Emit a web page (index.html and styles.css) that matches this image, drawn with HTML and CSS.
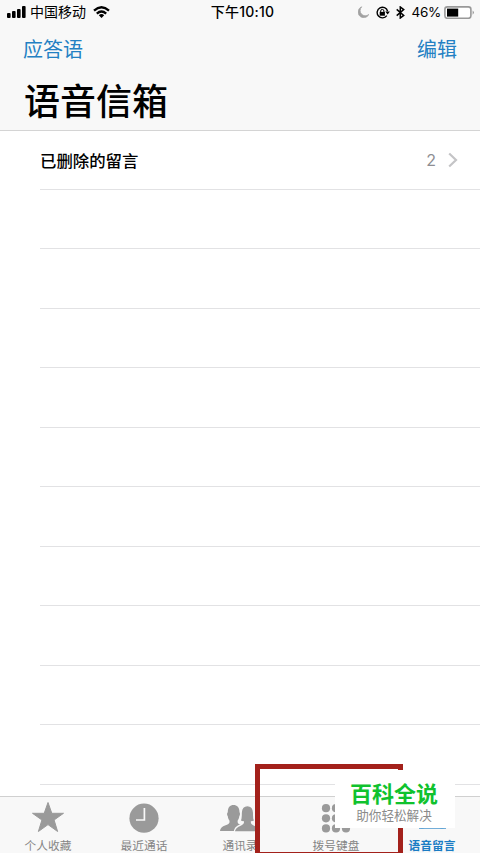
FILE: index.html
```html
<!DOCTYPE html>
<html lang="zh-CN">
<head>
    <meta charset="UTF-8">
    <title>语音信箱</title>
    <link rel="stylesheet" href="styles.css">
</head>
<body>
    <div class="phone">
        <header class="header">
            <div class="status-bar">
                <div class="status-left">
                    <svg class="signal" width="19" height="12" viewBox="0 0 19 12">
                        <rect x="0" y="7" width="3.6" height="5" rx="1"/>
                        <rect x="5" y="5" width="3.6" height="7" rx="1"/>
                        <rect x="10" y="3" width="3.6" height="9" rx="1"/>
                        <rect x="15" y="0" width="3.6" height="12" rx="1"/>
                    </svg>
                    <span class="carrier">中国移动</span>
                    <svg class="wifi" width="17" height="12" viewBox="0 0 17 12" fill="none" stroke="#000" stroke-width="2.3">
                        <path d="M1 4.6Q8.5-2 16 4.6"/>
                        <path d="M3.8 7.6Q8.5 3.4 13.2 7.6"/>
                        <path d="M8.5 12L5.8 9.2Q8.5 7 11.2 9.2Z" fill="#000" stroke="none"/>
                    </svg>
                </div>
                <div class="status-time">下午10:10</div>
                <div class="status-right">
                    <svg width="11" height="12" viewBox="0 0 11 12">
                        <path d="M3.8.8A5.6 5.6 0 1 0 10.8 8.4 5.1 5.1 0 0 1 3.8.8Z" fill="#a2a2a2" stroke="#a2a2a2" stroke-width=".7"/>
                    </svg>
                    <svg class="lock" width="14" height="13" viewBox="0 0 14 13" fill="none" stroke="#000">
                        <path d="M10.8 9.6A5.3 5.3 0 1 1 11.6 5.2" stroke-width="1.4"/>
                        <path d="M9.3 5.4h4.6L11.6 8.6Z" fill="#000" stroke="none"/>
                        <path d="M4.7 6.4V5a1.6 1.6 0 0 1 3.2 0v1.4" stroke-width="1"/>
                        <rect x="3.7" y="5.9" width="5.2" height="3.8" fill="#000" stroke="none"/>
                    </svg>
                    <svg class="bluetooth" width="9" height="13" viewBox="0 0 9 13" fill="none" stroke="#000" stroke-width="1.5">
                        <path d="M.7 3.4l7 6L4.3 12V1l3.4 2.6-7 6"/>
                    </svg>
                    <span class="percent">46%</span>
                    <svg class="battery" width="30" height="13" viewBox="0 0 30 13">
                        <rect x=".9" y=".9" width="26" height="11.4" rx="2.5" fill="#fff" stroke="#999" stroke-width="1.6"/>
                        <rect x="3" y="2.6" width="11.2" height="8" fill="#000"/>
                        <path d="M28.7 4.4q2.2 2.2 0 4.4Z" fill="#888"/>
                    </svg>
                </div>
            </div>
            <div class="nav-bar">
                <a class="nav-link">应答语</a>
                <a class="nav-link">编辑</a>
            </div>
            <h1>语音信箱</h1>
        </header>

        <main class="list">
            <div class="row">
                <span class="row-title">已删除的留言</span>
                <span class="row-count">2</span>
                <svg class="chevron" width="10" height="16" viewBox="0 0 10 16" fill="none" stroke="#c4c4c6" stroke-width="2.2">
                    <path d="M1.2 1.5L8 8l-6.8 6.5"/>
                </svg>
            </div>
            <div class="row"></div>
            <div class="row"></div>
            <div class="row"></div>
            <div class="row"></div>
            <div class="row"></div>
            <div class="row"></div>
            <div class="row"></div>
            <div class="row"></div>
            <div class="row"></div>
            <div class="row"></div>
        </main>

        <nav class="tab-bar">
            <div class="tab">
                <svg width="34" height="32" viewBox="0 0 34 32">
                    <path d="M17 1.5L20.8 12.3H32.5L23.1 19 26.6 30.5 17 23.6 7.4 30.5 10.9 19 1.5 12.3H13.2Z" fill="#9a9a9a" stroke="#9a9a9a" stroke-linejoin="round"/>
                </svg>
                <span>个人收藏</span>
            </div>
            <div class="tab">
                <svg width="34" height="32" viewBox="0 0 34 32">
                    <circle cx="17" cy="17.2" r="14.6" fill="#9a9a9a"/>
                    <path d="M17.4 7v12H9" fill="none" stroke="#f8f8f8" stroke-width="1.7"/>
                </svg>
                <span>最近通话</span>
            </div>
            <div class="tab">
                <svg width="42" height="32" viewBox="0 0 42 32" fill="#9a9a9a">
                    <path d="M1 30c.4-3.6 3.2-5 7-6.3 2.2-.8 3-2.2 2.4-4.2-1-1.3-1.4-2.6-1.6-4.3-1-1.3-1-3 0-4C8.8 6.500 11 4 14.500 4s6 2.500 6 7.200c.8 1 .6 2.700-.2 4-.2 1.700-.6 3-1.600 4.300-.5 2 .3 3.400 2.500 4.200L20 30Z"/>
                    <path d="M15.200 31c.3-4.500 3.200-6 6.800-7.200 2-.7 2.600-1.500 2.300-3-1.200.1-2.300-.2-3.300-.9 1.600-2.200 1-5.500 1.200-8.500.3-4.200 2.600-6.700 6.200-6.700s5.900 2.500 6.200 6.700c.2 3-.4 6.300 1.200 8.500-1 .7-2.100 1-3.300.9-.3 1.500.3 2.300 2.300 3 3.600 1.200 6.500 2.700 6.800 7.200Z" stroke="#f8f8f8" stroke-width="1.300"/>
                </svg>
                <span>通讯录</span>
            </div>
            <div class="tab">
                <svg width="30" height="32" viewBox="0 0 30 32" fill="#9a9a9a">
                    <circle cx="5" cy="7.2" r="4.1"/>
                    <circle cx="15" cy="7.2" r="4.1"/>
                    <circle cx="25" cy="7.2" r="4.1"/>
                    <circle cx="5" cy="17.3" r="4.1"/>
                    <circle cx="15" cy="17.3" r="4.1"/>
                    <circle cx="25" cy="17.3" r="4.1"/>
                    <circle cx="5" cy="27.4" r="4.1"/>
                    <circle cx="15" cy="27.4" r="4.1"/>
                    <circle cx="25" cy="27.4" r="4.1"/>
                </svg>
                <span>拨号键盘</span>
            </div>
            <div class="tab active">
                <svg width="40" height="32" viewBox="0 0 40 32" fill="none" stroke="#1a7cc4" stroke-width="2.4">
                    <circle cx="10" cy="18" r="8"/>
                    <circle cx="30" cy="18" r="8"/>
                    <path d="M7 26.4h27"/>
                </svg>
                <span>语音留言</span>
            </div>
        </nav>

        <!-- highlight over the keypad tab -->
        <div class="highlight"></div>
        <div class="badge">
            <div class="badge-title">百科全说</div>
            <div class="badge-text">助你轻松解决</div>
        </div>
    </div>
</body>
</html>
```
FILE: styles.css
```css
* {
    box-sizing: border-box;
}

body {
    margin: 0;
    font-family: "Liberation Sans", "Noto Sans CJK SC", sans-serif;
    background: #fff;
    color: #000;
}

.phone {
    position: relative;
    width: 480px;
    height: 853px;
    display: flex;
    flex-direction: column;
    overflow: hidden;
}

svg {
    display: block;
    flex-shrink: 0;
}

.header {
    height: 131px;
    background: #f8f8f8;
    border-bottom: 1px solid #d4d4d4;
}

.status-bar {
    display: grid;
    grid-template-columns: 1fr auto 1fr;
    align-items: center;
    height: 24px;
    padding: 0 6px 0 7px;
    font-size: 14px;
    line-height: 24px;
}

.status-left,
.status-right {
    display: flex;
    align-items: center;
}

.status-right {
    justify-content: flex-end;
}

.carrier {
    margin-left: 4px;
}

.wifi {
    margin-left: 7px;
}

.status-time {
    font-family: Inter, "Noto Sans CJK SC", sans-serif;
    font-size: 14px;
    font-weight: 500;
    letter-spacing: 0.2px;
    padding-left: 4px;
}

.lock {
    margin-left: 7px;
}

.bluetooth {
    margin-left: 6px;
}

.percent {
    margin-left: 7px;
    font-family: Inter, sans-serif;
    font-size: 13.5px;
    letter-spacing: -0.3px;
}

.battery {
    margin-left: 3px;
}

.nav-bar {
    display: flex;
    justify-content: space-between;
    height: 52px;
    padding: 0 23px 0 23px;
    line-height: 52px;
}

.nav-link {
    font-size: 20px;
    color: #2380c3;
}

h1 {
    margin: 0;
    padding-left: 24px;
    font-size: 36px;
    font-weight: 500;
    line-height: 54px;
}

.list {
    height: 665px;
}

.row {
    display: flex;
    align-items: center;
    height: 59.5px;
    margin-left: 40px;
    padding-right: 22px;
    border-bottom: 1px solid #e2e2e4;
}

.row:first-child {
    height: 58.9px;
}

.row-title {
    flex: 1;
    font-size: 16.4px;
    font-weight: 500;
}

.row-count {
    font-family: Inter, sans-serif;
    font-size: 16px;
    color: #8e8e93;
}

.chevron {
    margin-left: 12px;
}

.tab-bar {
    display: grid;
    grid-template-columns: repeat(5, 1fr);
    height: 57px;
    background: #f8f8f8;
    border-top: 1px solid #d0d0d0;
}

.tab {
    display: flex;
    flex-direction: column;
    align-items: center;
    padding-top: 4px;
    font-size: 11.7px;
    line-height: 17px;
    color: #858585;
}

.tab span {
    margin-top: 4px;
}

.active {
    color: #1a7cc4;
    font-weight: 700;
}

.highlight {
    position: absolute;
    left: 255px;
    top: 764px;
    width: 148px;
    height: 89px;
    border: 5px solid #a3211b;
    border-bottom-width: 1px;
}

.badge {
    position: absolute;
    left: 335px;
    top: 770px;
    width: 120px;
    height: 58px;
    padding: 11px 2px 0 0;
    background: #fff;
    text-align: center;
}

.badge-title {
    font-size: 22px;
    font-weight: 700;
    line-height: 28px;
    color: #10c22e;
}

.badge-text {
    font-size: 12.6px;
    line-height: 14px;
    color: #8a8a8a;
}
```
